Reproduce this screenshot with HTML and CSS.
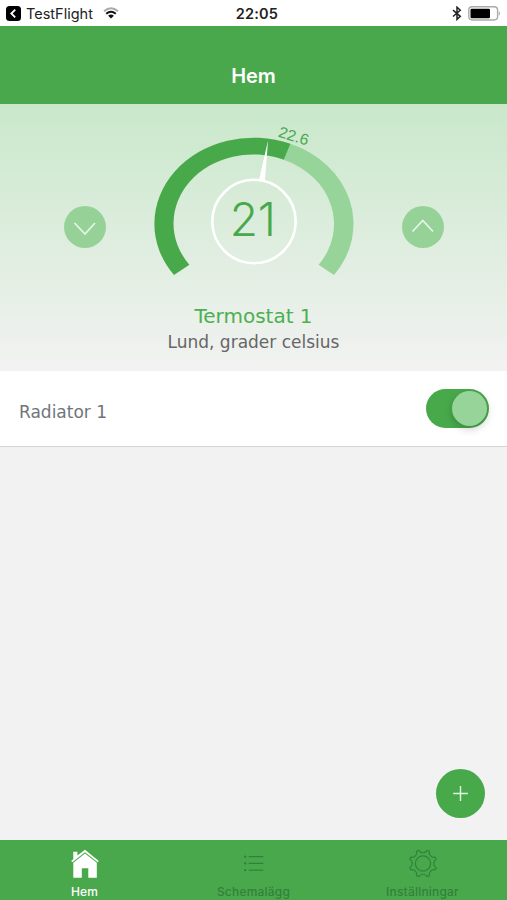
FILE: index.html
```
<!DOCTYPE html>
<html lang="sv">
<head>
  <meta charset="UTF-8">
  <meta name="viewport" content="width=device-width, initial-scale=1.0">
  <title>Hem</title>
  <link rel="stylesheet" href="styles.css">
</head>
<body>
  <div class="app">
    <!-- Status bar -->
    <div class="status-bar">
      <div class="status-left">
        <svg class="back-icon" width="15" height="15" viewBox="0 0 15 15">
          <rect width="15" height="15" rx="3.5" fill="#000"/>
          <path d="M9.2 3.6L5.3 7.5L9.2 11.4" fill="none" stroke="#fff" stroke-width="1.8"/>
        </svg>
        <span class="back-app">TestFlight</span>
        <svg class="wifi-icon" width="16" height="12" viewBox="0 0 16 12">
          <path d="M1 4.2Q8 -1.6 15 4.2" fill="none" stroke="#aaa" stroke-width="1.8"/>
          <path d="M3.2 6.8Q8 2.8 12.8 6.8" fill="none" stroke="#111" stroke-width="1.9"/>
          <path d="M5.1 8.7Q8 6.4 10.9 8.7L8 11.6Z" fill="#111"/>
        </svg>
      </div>
      <span class="clock">22:05</span>
      <div class="status-right">
        <svg width="10" height="15" viewBox="0 0 10 15">
          <path d="M1 4.2L8.3 10.3L5 13.4V1.2L8.3 4.3L1 10.5" fill="none" stroke="#222" stroke-width="1.5"/>
        </svg>
        <svg width="33" height="15" viewBox="0 0 33 15">
          <rect x="0.8" y="0.8" width="28.8" height="13.2" rx="3.4" fill="#fff" stroke="#aaa" stroke-width="1.4"/>
          <rect x="2.5" y="2.7" width="19.5" height="9.6" rx="1.2" fill="#000"/>
          <path d="M30.8 5Q33.2 7.4 30.8 10Z" fill="#aaa"/>
        </svg>
      </div>
    </div>

    <header>
      <h1>Hem</h1>
    </header>

    <!-- Thermostat -->
    <section class="thermostat">
      <div class="dial-row">
        <button class="step" aria-label="Sänk">
          <svg width="42" height="42" viewBox="0 0 42 42"><path d="M10.5 17L21 28L31 17"/></svg>
        </button>
        <svg class="gauge" width="220" height="170" viewBox="144 116 220 170">
          <path class="gauge-rest" d="M290.5 143.8A99.3 86 0 0 1 334 275L318.6 264.8A79.5 69 0 0 0 283.8 159.8Z"/>
          <path class="gauge-value" d="M174 275A99.3 86 0 0 1 290.5 143.8L283.8 159.8A79.5 69 0 0 0 189.4 264.8Z"/>
          <path class="needle" d="M268 140.5L258.8 181L264.8 182Z"/>
          <circle class="hub" cx="254" cy="221.5" r="41.7"/>
          <text class="gauge-temp" x="252.8" y="236.3" text-anchor="middle">21</text>
          <text class="gauge-label" transform="translate(277.4 136.6) rotate(17)" textLength="31" lengthAdjust="spacingAndGlyphs">22.6</text>
        </svg>
        <button class="step" aria-label="Höj">
          <svg width="42" height="42" viewBox="0 0 42 42"><path d="M10.5 25.5L20.8 14.5L31 25.5"/></svg>
        </button>
      </div>
      <h2>Termostat 1</h2>
      <p>Lund, grader celsius</p>
    </section>

    <!-- Connected device -->
    <div class="device">
      <span class="device-name">Radiator 1</span>
      <div class="toggle"><div class="toggle-knob"></div></div>
    </div>

    <main>
      <button class="add" aria-label="Lägg till">
        <svg width="49" height="49" viewBox="0 0 49 49"><path d="M24.5 17V32M17.2 24.5H31.8"/></svg>
      </button>
    </main>

    <!-- Tab bar -->
    <nav>
      <a class="tab active">
        <svg width="30" height="30" viewBox="0 0 30 30">
          <path d="M3.3 10.3V2.8H7.4V6.4L15 0.8L28.8 12L27.7 13.3L15 3.2L2.3 13.3L1.2 12Z"/>
          <path d="M3.3 13.8L15 4.6L26.8 13.8V28.7H18.3V19.2H11.8V28.7H3.3Z"/>
        </svg>
        <span>Hem</span>
      </a>
      <a class="tab">
        <svg width="30" height="30" viewBox="0 0 30 30">
          <path class="line" d="M9.7 7.7H24.3M9.7 14.4H24.3M9.7 21.1H24.3"/>
          <circle cx="6.2" cy="7.7" r="1.2"/>
          <circle cx="6.2" cy="14.4" r="1.2"/>
          <circle cx="6.2" cy="21.1" r="1.2"/>
        </svg>
        <span>Schemalägg</span>
      </a>
      <a class="tab">
        <svg width="30" height="30" viewBox="0 0 30 30">
          <circle class="line" cx="15" cy="14.5" r="7.6"/>
          <path class="line" d="M10.85 1.34A4.8 4.8 0 0 0 19.15 1.34L21.37 2.26A4.8 4.8 0 0 0 27.24 8.13L28.16 10.35A4.8 4.8 0 0 0 28.16 18.65L27.24 20.87A4.8 4.8 0 0 0 21.37 26.74L19.15 27.66A4.8 4.8 0 0 0 10.85 27.66L8.63 26.74A4.8 4.8 0 0 0 2.76 20.87L1.84 18.65A4.8 4.8 0 0 0 1.84 10.35L2.76 8.13A4.8 4.8 0 0 0 8.63 2.26Z"/>
        </svg>
        <span>Inställningar</span>
      </a>
    </nav>
  </div>
</body>
</html>
```
FILE: styles.css
```
/* Reset */
* {
  box-sizing: border-box;
  margin: 0;
  padding: 0;
}
body {
  font-family: Inter, "Liberation Sans", sans-serif;
  background: #f2f2f2;
}
svg {
  display: block;
}
button {
  border: none;
  cursor: pointer;
}
.app {
  display: flex;
  flex-direction: column;
  height: 900px;
}
/* Status bar */
.status-bar {
  display: grid;
  grid-template-columns: 1fr auto 1fr;
  align-items: center;
  height: 26px;
  padding: 0 6px;
  background: #fff;
  color: #222;
  font-size: 14.5px;
}
.status-left,
.status-right {
  display: flex;
  align-items: center;
}
.back-app {
  margin: 0 10px 0 5px;
}
.clock {
  font-weight: 600;
  letter-spacing: 0.2px;
  margin-left: 7px;
}
.status-right {
  justify-content: flex-end;
  gap: 6px;
}
header {
  height: 78px;
  padding-top: 37px;
  background: #4aa84c;
  color: #fff;
  text-align: center;
}
header h1 {
  font-size: 20px;
  font-weight: 600;
  line-height: 26px;
}
/* Thermostat */
.thermostat {
  height: 267px;
  padding-top: 12px;
  background: linear-gradient(#c9e8ca, #f2f2f2);
  font-family: Verdana, "DejaVu Sans", sans-serif;
  text-align: center;
}
.dial-row {
  display: flex;
  align-items: center;
  justify-content: center;
  gap: 38px;
}
.step {
  width: 42px;
  height: 42px;
  margin-top: 52px;
  border-radius: 50%;
  background: #96d298;
}
.step path {
  fill: none;
  stroke: #e6f6e7;
  stroke-width: 1.7;
}
.gauge-value {
  fill: #48a94b;
}
.gauge-rest {
  fill: #97d499;
}
.needle {
  fill: #fff;
}
.hub {
  fill: none;
  stroke: #fff;
  stroke-width: 2.6;
}
.gauge-temp {
  fill: #48a94b;
  font-family: Inter, sans-serif;
  font-size: 46px;
  font-weight: 350;
}
.gauge-label {
  fill: #48a94b;
  font-family: "Liberation Sans", sans-serif;
  font-size: 15.5px;
}
.thermostat h2 {
  margin-top: 18px;
  color: #4caf50;
  font-size: 20px;
  font-weight: 400;
  line-height: 25px;
}
.thermostat p {
  color: #666;
  font-size: 17px;
  line-height: 26px;
}
/* Device row */
.device {
  display: flex;
  align-items: center;
  justify-content: space-between;
  height: 76px;
  padding: 0 18px 0 19px;
  background: #fff;
  border-bottom: 1px solid #d4d4d4;
}
.device-name {
  margin-top: 6px;
  color: #70757a;
  font-family: Verdana, "DejaVu Sans", sans-serif;
  font-size: 17px;
}
.toggle {
  display: flex;
  justify-content: flex-end;
  width: 63px;
  height: 39px;
  padding: 2px;
  border-radius: 20px;
  background: #48a94b;
}
.toggle-knob {
  width: 35px;
  height: 35px;
  border-radius: 50%;
  background: #97d499;
  box-shadow: 0 3px 8px rgba(0,0,0,0.2);
}
main {
  flex: 1;
  display: flex;
  align-items: flex-end;
  justify-content: flex-end;
  padding: 0 22px 22px;
}
.add {
  width: 49px;
  height: 49px;
  border-radius: 50%;
  background: #48a94b;
}
.add path {
  stroke: #e4f5e4;
  stroke-width: 1.4;
}
/* Tab bar */
nav {
  display: flex;
  height: 60px;
  background: #4aa84c;
}
.tab {
  flex: 1;
  display: flex;
  flex-direction: column;
  align-items: center;
  gap: 5px;
  padding-top: 9px;
  color: #31813a;
  fill: #31813a;
  font-size: 12px;
  font-weight: 450;
  line-height: 15px;
  letter-spacing: 0.2px;
}
.tab .line {
  fill: none;
  stroke: #31813a;
  stroke-width: 1.2;
  stroke-linejoin: round;
}
.tab.active {
  color: #fff;
  fill: #fff;
  font-weight: 500;
}
```
